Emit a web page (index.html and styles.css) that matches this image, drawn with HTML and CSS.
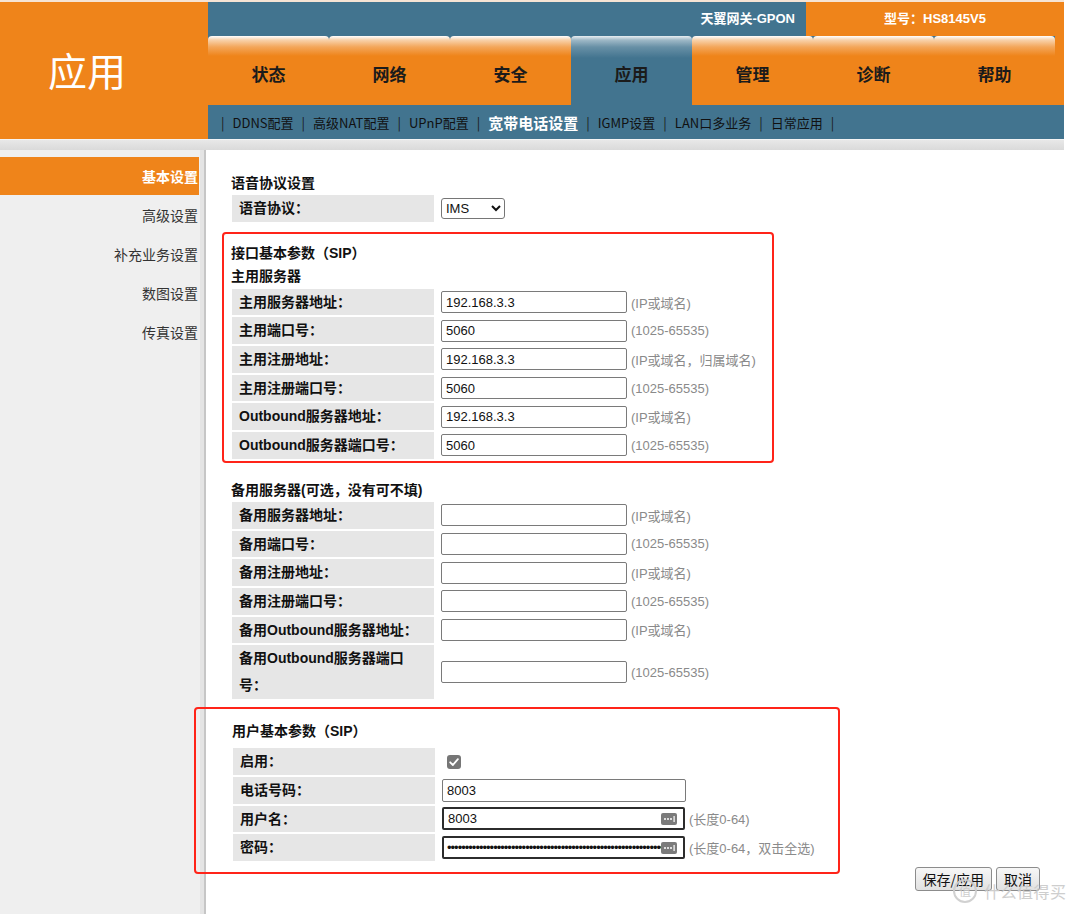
FILE: index.html
```html
<!DOCTYPE html>
<html lang="zh-CN">
  <head>
    <meta charset="UTF-8" />
    <title>应用 - 宽带电话设置</title>
    <link rel="stylesheet" href="styles.css">
  </head>
  <body>
    <div class="page">
      <header class="head">
        <div class="brand">应用</div>
        <div class="head-main">
          <div class="topbar">
            <div class="gw">天翼网关-GPON</div>
            <div class="model">型号：HS8145V5</div>
          </div>
          <div class="tabs-row">
            <nav class="tabs">
              <a class="tab">状态</a>
              <a class="tab">网络</a>
              <a class="tab">安全</a>
              <a class="tab active">应用</a>
              <a class="tab">管理</a>
              <a class="tab">诊断</a>
              <a class="tab">帮助</a>
            </nav>
            <div class="tabs-end"></div>
          </div>
          <div class="subnav">
            <span class="sep">|</span><a>DDNS配置</a>
            <span class="sep">|</span><a>高级NAT配置</a>
            <span class="sep">|</span><a>UPnP配置</a>
            <span class="sep">|</span><a class="cur">宽带电话设置</a>
            <span class="sep">|</span><a>IGMP设置</a>
            <span class="sep">|</span><a>LAN口多业务</a>
            <span class="sep">|</span><a>日常应用</a>
            <span class="sep">|</span>
          </div>
        </div>
      </header>
      <div class="band"></div>

      <div class="body">
        <aside class="side">
          <a class="side-item active">基本设置</a>
          <a class="side-item">高级设置</a>
          <a class="side-item">补充业务设置</a>
          <a class="side-item">数图设置</a>
          <a class="side-item">传真设置</a>
        </aside>

        <main class="content">
          <div class="sec-title">语音协议设置</div>
          <div class="row">
            <div class="lbl">语音协议：</div>
            <div class="val">
              <select class="sel"><option>IMS</option></select>
            </div>
          </div>

          <!-- 接口基本参数 -->
          <div class="mark mark-sip">
            <div class="sec-title gap">接口基本参数（SIP）</div>
            <div class="sec-title">主用服务器</div>
            <div class="row">
              <div class="lbl">主用服务器地址：</div>
              <div class="val"><input class="txt" type="text" value="192.168.3.3"><span class="hint">(IP或域名)</span></div>
            </div>
            <div class="row">
              <div class="lbl">主用端口号：</div>
              <div class="val"><input class="txt" type="text" value="5060"><span class="hint">(1025-65535)</span></div>
            </div>
            <div class="row">
              <div class="lbl">主用注册地址：</div>
              <div class="val"><input class="txt" type="text" value="192.168.3.3"><span class="hint">(IP或域名，归属域名)</span></div>
            </div>
            <div class="row">
              <div class="lbl">主用注册端口号：</div>
              <div class="val"><input class="txt" type="text" value="5060"><span class="hint">(1025-65535)</span></div>
            </div>
            <div class="row">
              <div class="lbl">Outbound服务器地址：</div>
              <div class="val"><input class="txt" type="text" value="192.168.3.3"><span class="hint">(IP或域名)</span></div>
            </div>
            <div class="row">
              <div class="lbl">Outbound服务器端口号：</div>
              <div class="val"><input class="txt" type="text" value="5060"><span class="hint">(1025-65535)</span></div>
            </div>
          </div>

          <!-- 备用服务器 -->
          <div class="sec-title backup">备用服务器(可选，没有可不填)</div>
          <div class="row">
            <div class="lbl">备用服务器地址：</div>
            <div class="val"><input class="txt" type="text"><span class="hint">(IP或域名)</span></div>
          </div>
          <div class="row">
            <div class="lbl">备用端口号：</div>
            <div class="val"><input class="txt" type="text"><span class="hint">(1025-65535)</span></div>
          </div>
          <div class="row">
            <div class="lbl">备用注册地址：</div>
            <div class="val"><input class="txt" type="text"><span class="hint">(IP或域名)</span></div>
          </div>
          <div class="row">
            <div class="lbl">备用注册端口号：</div>
            <div class="val"><input class="txt" type="text"><span class="hint">(1025-65535)</span></div>
          </div>
          <div class="row">
            <div class="lbl">备用Outbound服务器地址：</div>
            <div class="val"><input class="txt" type="text"><span class="hint">(IP或域名)</span></div>
          </div>
          <div class="row">
            <div class="lbl tall">备用Outbound服务器端口<br>号：</div>
            <div class="val"><input class="txt" type="text"><span class="hint">(1025-65535)</span></div>
          </div>

          <!-- 用户基本参数 -->
          <div class="mark mark-user">
            <div class="sec-title user-title">用户基本参数（SIP）</div>
            <div class="row">
              <div class="lbl">启用：</div>
              <div class="val">
                <span class="chk">
                  <svg width="14" height="14" viewBox="0 0 14 14"><path d="M3.2 7.3 L5.9 10 L10.9 4.2" fill="none" stroke="#fff" stroke-width="1.8" stroke-linecap="round" stroke-linejoin="round"/></svg>
                </span>
              </div>
            </div>
            <div class="row">
              <div class="lbl">电话号码：</div>
              <div class="val"><input class="txt wide" type="text" value="8003"></div>
            </div>
            <div class="row">
              <div class="lbl">用户名：</div>
              <div class="val">
                <div class="keybox">
                  <input class="txt wide dark" type="text" value="8003">
                  <span class="key"><svg width="16" height="12" viewBox="0 0 16 12"><rect x="0" y="0" width="16" height="12" rx="2" fill="#7b7b7b"/><circle cx="4" cy="6" r="1" fill="#fff"/><circle cx="7" cy="6" r="1" fill="#fff"/><circle cx="10" cy="6" r="1" fill="#fff"/><rect x="12.5" y="3" width="1.2" height="6" fill="#fff"/></svg></span>
                </div>
                <span class="hint">(长度0-64)</span>
              </div>
            </div>
            <div class="row">
              <div class="lbl">密码：</div>
              <div class="val">
                <div class="keybox">
                  <input class="txt wide dark pw" type="password" value="aaaaaaaaaaaaaaaaaaaaaaaaaaaaaaaaaaaaaaaaaaaaaaaaaaaaaaaaaaaaaa">
                  <span class="key"><svg width="16" height="12" viewBox="0 0 16 12"><rect x="0" y="0" width="16" height="12" rx="2" fill="#7b7b7b"/><circle cx="4" cy="6" r="1" fill="#fff"/><circle cx="7" cy="6" r="1" fill="#fff"/><circle cx="10" cy="6" r="1" fill="#fff"/><rect x="12.5" y="3" width="1.2" height="6" fill="#fff"/></svg></span>
                </div>
                <span class="hint">(长度0-64，双击全选)</span>
              </div>
            </div>
          </div>

          <div class="actions">
            <button class="btn">保存/应用</button>
            <button class="btn">取消</button>
          </div>
        </main>
      </div>

      <div class="watermark">
        <span class="wm-logo">值</span>
        <span class="wm-text">什么值得买</span>
      </div>
    </div>
  </body>
</html>
```

FILE: styles.css
```css
body {
  margin: 0;
  background-color: #fff;
  color: #111;
  font-family: "Liberation Sans", "Noto Sans CJK SC", sans-serif;
  font-size: 14px;
}
a {
  cursor: pointer;
}
.page {
  position: relative;
  width: 1064px;
  border-top: 2px solid #f6e4d4;
}

/* header */
.head {
  display: flex;
  height: 137px;
}
.brand {
  width: 208px;
  background-color: #ef841a;
  color: #fff;
  font-family: "Noto Sans CJK SC", sans-serif;
  font-size: 39px;
  line-height: 40px;
  padding: 47px 0 0 48px;
  box-sizing: border-box;
}
.head-main {
  flex: 1;
  display: flex;
  flex-direction: column;
}
.topbar {
  display: flex;
  height: 34px;
  font-weight: bold;
  font-size: 13px;
  color: #fff;
}
.gw {
  flex: 1;
  background-color: #42748f;
  text-align: right;
  padding-right: 11px;
  line-height: 34px;
}
.model {
  width: 258px;
  background-color: #ef841a;
  text-align: center;
  line-height: 34px;
}
.tabs-row {
  display: flex;
  height: 69px;
  background-color: #42748f;
}
.tabs {
  display: flex;
}
.tab {
  width: 121px;
  box-sizing: border-box;
  padding-top: 6px;
  display: flex;
  align-items: center;
  justify-content: center;
  border-radius: 4px 4px 0 0;
  background: linear-gradient(#ffffff 0, #f8d2ab 4px, #f3a65a 11px, #ef841a 20px);
  font-family: "Noto Sans CJK SC", sans-serif;
  font-weight: bold;
  font-size: 17px;
  color: #1b1b1b;
}
.tab.active {
  background: linear-gradient(#e8eef2 0, #9fb9c7 4px, #6890a6 11px, #42748f 22px);
}
.tabs-end {
  flex: 1;
  background-color: #ef841a;
}
.subnav {
  height: 34px;
  background-color: #42748f;
  display: flex;
  align-items: center;
  gap: 8px;
  padding-left: 13px;
  font-family: "Noto Sans CJK SC", sans-serif;
  font-size: 13px;
  color: #111;
}
.subnav .sep {
  color: #1a1a1a;
}
.subnav .cur {
  color: #fff;
  font-weight: bold;
  font-size: 15px;
}
.band {
  height: 10px;
  border-top: 1px solid #f4f4f4;
  background: linear-gradient(#e8e8e8, #dadada);
}

/* body */
.body {
  display: flex;
  min-height: 764px;
  background-color: #e4e4e4;
}
.side {
  width: 200px;
  background-color: #efefef;
  padding-top: 7px;
  display: flex;
  flex-direction: column;
}
.side-item {
  width: 199px;
  height: 38px;
  line-height: 38px;
  margin-bottom: 1px;
  box-sizing: border-box;
  padding-right: 1px;
  text-align: right;
  font-family: "Noto Sans CJK SC", sans-serif;
  font-size: 14px;
  color: #333;
}
.side-item.active {
  background-color: #ef841a;
  color: #fff;
  font-weight: bold;
}
.content {
  flex: 1;
  margin-left: 4px;
  border-left: 2px solid #c6c6c6;
  background-color: #fff;
  padding: 23px 24px 0 26px;
}

/* form */
.sec-title {
  font-weight: bold;
  font-size: 14px;
  line-height: 20px;
  margin-bottom: 2px;
  margin-left: -1px;
}
.sec-title.gap {
  margin-bottom: 3px;
}
.mark {
  border: 2px solid #ff2419;
  border-radius: 4px;
  box-sizing: border-box;
}
.mark-sip {
  width: 552px;
  margin: 10px 0 0 -10px;
  padding: 9px 0 0 8px;
}
.mark-sip .sec-title {
  margin-bottom: 3px;
}
.backup {
  margin-top: 17px;
}
.mark-user {
  width: 646px;
  margin: 8px 0 0 -38px;
  padding: 12px 0 9px 37px;
}
.user-title {
  margin-bottom: 7px;
}
.row {
  display: flex;
  margin-bottom: 2px;
}
.lbl {
  width: 202px;
  height: 26.7px;
  line-height: 26.7px;
  box-sizing: border-box;
  padding-left: 7px;
  background-color: #e6e6e6;
  font-weight: bold;
  font-size: 14px;
  white-space: nowrap;
}
.lbl.tall {
  height: 54px;
  line-height: 27px;
}
.val {
  display: flex;
  align-items: center;
  padding-left: 7px;
}
.txt {
  width: 186px;
  height: 22px;
  box-sizing: border-box;
  border: 1px solid #7a7a7a;
  border-radius: 2px;
  padding: 0 4px;
  font-family: "Liberation Sans", sans-serif;
  font-size: 13px;
  color: #111;
  outline: none;
}
.txt.wide {
  width: 244px;
  height: 23px;
}
.txt.dark {
  width: 243px;
  border: 2px solid #2c2c2c;
  padding-right: 26px;
}
.txt.pw {
  font-size: 13px;
  letter-spacing: -1px;
  padding-left: 3px;
  padding-right: 8px;
}
.keybox {
  position: relative;
  display: flex;
}
.key {
  position: absolute;
  right: 8px;
  top: 5px;
  height: 12px;
}
.hint {
  margin-left: 4px;
  color: #8a8a8a;
  font-size: 13px;
  white-space: nowrap;
}
.sel {
  width: 64px;
  height: 21px;
  border: 1px solid #767676;
  border-radius: 3px;
  background-color: #fff;
  font-family: "Liberation Sans", sans-serif;
  font-size: 13px;
  color: #111;
}
.chk {
  width: 14px;
  height: 14px;
  margin-left: 5px;
  border-radius: 3px;
  background-color: #767676;
  display: flex;
}
.actions {
  display: flex;
  justify-content: flex-end;
  gap: 4px;
  margin-top: -7px;
}
.btn {
  height: 24px;
  padding: 0 7px;
  border: 1px solid #8c8c8c;
  border-radius: 3px;
  background: linear-gradient(#f7f7f7, #e1e1e1);
  font-family: "Noto Sans CJK SC", sans-serif;
  font-size: 14px;
  color: #111;
}

/* watermark */
.watermark {
  position: absolute;
  left: 953px;
  top: 877px;
  display: flex;
  align-items: center;
  gap: 7px;
  white-space: nowrap;
  color: #c9c9c9;
  opacity: 0.9;
  font-family: "Noto Sans CJK SC", sans-serif;
}
.wm-logo {
  width: 20px;
  height: 20px;
  border: 2px solid #cdcdcd;
  border-radius: 50%;
  font-size: 12px;
  line-height: 20px;
  text-align: center;
}
.wm-text {
  font-size: 16px;
  letter-spacing: 0.5px;
}
```
